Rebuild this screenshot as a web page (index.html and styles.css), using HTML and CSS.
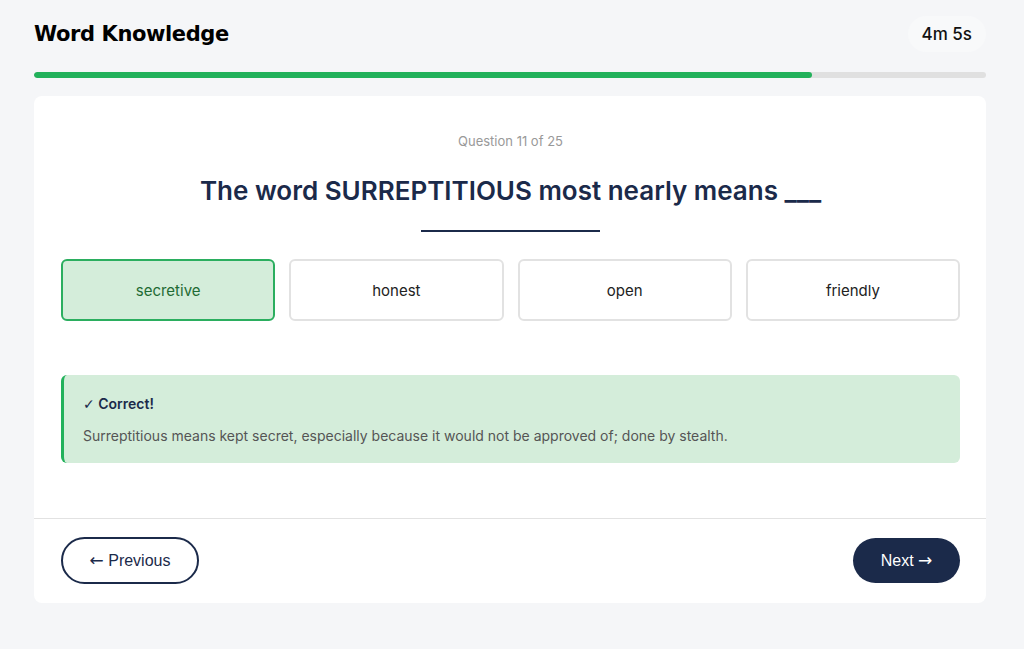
FILE: index.html
```html
<!DOCTYPE html>
<html lang="en">
<head>
    <meta charset="UTF-8">
    <meta name="viewport" content="width=device-width, initial-scale=1.0">
    <title>Word Knowledge - Quiz</title>
    <link rel="stylesheet" href="styles.css">
</head>
<body>
    <div class="quiz">
        <div class="topbar">
            <h1 class="title">Word Knowledge</h1>
            <div class="timer">4m 5s</div>
        </div>
        <div class="progress">
            <div class="progress-fill" style="width: 81.7%"></div>
        </div>

        <div class="card">
            <div class="card-body">
                <p class="counter">Question 11 of 25</p>
                <h2 class="question">The word SURREPTITIOUS most nearly means ___</h2>
                <div class="rule"></div>

                <div class="options">
                    <button class="option selected">secretive</button>
                    <button class="option">honest</button>
                    <button class="option">open</button>
                    <button class="option">friendly</button>
                </div>

                <div class="feedback">
                    <p class="feedback-title"><span class="check">&#10003;</span> Correct!</p>
                    <p class="feedback-text">Surreptitious means kept secret, especially because it would not be approved of; done by stealth.</p>
                </div>
            </div>
            <div class="card-footer">
                <button class="nav-btn prev"><span class="arrow">&larr;</span> Previous</button>
                <button class="nav-btn next">Next <span class="arrow">&rarr;</span></button>
            </div>
        </div>
    </div>
</body>
</html>
```

FILE: styles.css
```css
* {
    margin: 0;
    padding: 0;
    box-sizing: border-box;
}
body {
    background: #f5f6f8;
    font-family: Inter, "Liberation Sans", sans-serif;
    color: #1b2a4a;
}
.quiz {
    width: 952px;
    margin-left: 34px;
}
.topbar {
    display: flex;
    justify-content: space-between;
    align-items: center;
    padding-top: 16px;
    height: 52px;
}
.title {
    font-family: "DejaVu Sans", sans-serif;
    font-size: 21px;
    font-weight: bold;
    color: #000;
    letter-spacing: -0.4px;
}
.timer {
    background: #f8f9fa;
    border-radius: 18px;
    padding: 8px 14px 8px 14px;
    font-size: 17px;
    font-weight: 500;
    color: #111;
}
.progress {
    margin-top: 20px;
    height: 6px;
    background: #e0e0e0;
    border-radius: 3px;
    overflow: hidden;
}
.progress-fill {
    height: 100%;
    background: #22b15b;
    border-radius: 3px;
}
.card {
    margin-top: 18px;
    background: #fff;
    border-radius: 8px;
}
.card-body {
    padding: 37px 26px 55px 27px;
}
.counter {
    text-align: center;
    font-size: 13px;
    color: #999;
}
.question {
    margin-top: 26px;
    text-align: center;
    font-size: 26px;
    font-weight: 600;
    color: #1b2a4a;
}
.rule {
    width: 179px;
    height: 2px;
    background: #1b2a4a;
    margin: 24px auto 0;
}
.options {
    margin-top: 27px;
    display: grid;
    grid-template-columns: repeat(4, 1fr);
    gap: 14px;
}
.option {
    height: 62px;
    background: #fff;
    border: 2px solid #e2e2e2;
    border-radius: 6px;
    font-family: Inter, sans-serif;
    font-size: 15px;
    color: #222;
}
.option.selected {
    background: #d4edda;
    border-color: #2bae5f;
    color: #1f6b34;
}
.feedback {
    margin-top: 54px;
    background: #d4edda;
    border-left: 3px solid #22b15b;
    border-radius: 6px;
    padding: 20px 19px 19px;
}
.feedback-title {
    font-size: 14px;
    font-weight: 600;
    color: #1b2a4a;
}
.check {
    font-family: "DejaVu Sans", sans-serif;
    font-weight: normal;
}
.feedback-text {
    margin-top: 15px;
    font-size: 14px;
    color: #555;
}
.card-footer {
    border-top: 1px solid #e2e2e2;
    display: flex;
    justify-content: space-between;
    align-items: center;
    padding: 18px 26px 19px 27px;
}
.nav-btn {
    font-family: "Liberation Sans", Arial, sans-serif;
    font-size: 16px;
    line-height: 1;
    border-radius: 24px;
    height: 47px;
}
.arrow {
    font-family: "DejaVu Sans", sans-serif;
    font-size: 17px;
    line-height: 1;
}
.prev {
    background: #fff;
    border: 2px solid #1b2a4a;
    color: #1b2a4a;
    width: 138px;
}
.next {
    background: #1b2a4a;
    border: none;
    color: #fff;
    width: 107px;
    height: 45px;
}
```
